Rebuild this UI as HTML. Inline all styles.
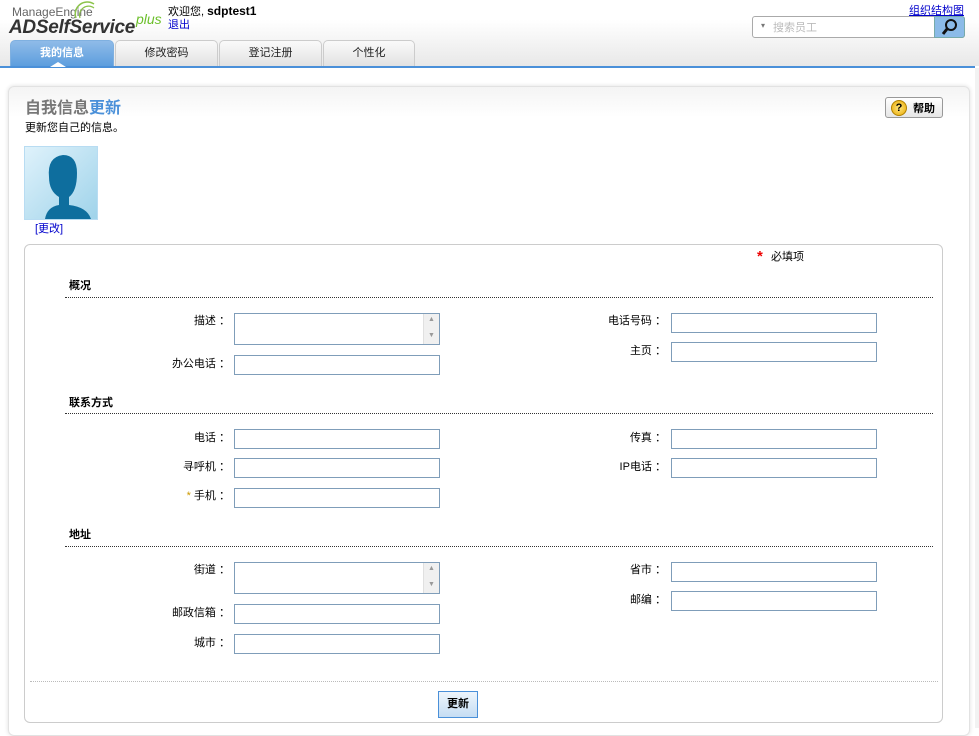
<!DOCTYPE html>
<html><head><meta charset="utf-8">
<style>
*{margin:0;padding:0;box-sizing:border-box}
body{width:979px;height:728px;overflow:hidden;background:#fff;font-family:"Liberation Sans","Noto Sans CJK SC",sans-serif;font-size:11px;color:#000;position:relative}
.a{position:absolute}
#hdr{left:0;top:0;width:979px;height:66px;background:linear-gradient(#fff,#fff 30%,#e8e8e8)}
#bl{left:0;top:66px;width:975px;height:2px;background:#4a90d9}
.tab{top:40px;height:26px;border:1px solid #ccc;border-bottom:none;border-radius:5px 5px 0 0;background:linear-gradient(#fafafa,#e2e2e2);text-align:center;line-height:24px;font-size:11px;color:#222}
.tab.on{background:linear-gradient(#8fbbe8,#5d9ede);border-color:#7fb0e0;color:#fff;font-weight:bold}
#panel{left:8px;top:86px;width:962px;height:650px;border:1px solid #e2e2e2;border-radius:6px;box-shadow:0 0 4px #ddd;background:linear-gradient(#f4f4f4,#fff 30px)}
.inp{height:20px;width:206px;border:1px solid #7f9db9;background:#fff}
.ta{height:32px;width:206px;border:1px solid #7f9db9;background:#fff}
.ta:after{content:"";position:absolute;right:0;top:0;width:15px;height:30px;background:#f0f0f0;border-left:1px solid #e0e0e0}
.lbl{font-size:11px;text-align:right;width:164px}
.sec{font-weight:bold;font-size:11px}
.hr{height:0;border-top:1px dotted #333}
</style></head><body>
<div id="hdr" class="a"></div>
<div class="a" style="left:12px;top:5px;font-size:12px;color:#666">ManageEngine</div>
<svg class="a" style="left:72px;top:0" width="26" height="20"><path d="M4 18 A12 12 0 0 1 22 4" stroke="#8bc34a" fill="none" stroke-width="1.5"/><path d="M8 18 A9 9 0 0 1 22 8" stroke="#8bc34a" fill="none" stroke-width="1.2"/></svg>
<div class="a" style="left:9px;top:17px;font-size:19px;font-weight:bold;font-style:italic;color:#333;letter-spacing:-0.3px">ADSelfService</div>
<div class="a" style="left:136px;top:11px;font-size:14px;color:#6bbf2a;font-style:italic">plus</div>
<div class="a" style="left:168px;top:3px;font-size:11px">欢迎您, <b style="font-size:12px">sdptest1</b></div>
<div class="a" style="left:168px;top:16px;font-size:11px;color:#00c">退出</div>
<div class="a" style="left:909px;top:2px;font-size:11px;color:#00c;text-decoration:underline">组织结构图</div>
<div class="a" style="left:752px;top:16px;width:213px;height:22px;border:1px solid #aaa;border-radius:3px;background:#fff"></div>
<div class="a" style="left:761px;top:21px;font-size:8px;color:#777">▾</div>
<div class="a" style="left:773px;top:19px;font-size:11px;color:#bbb">搜索员工</div>
<div class="a" style="left:934px;top:16px;width:31px;height:22px;background:#8bbbe8;border:1px solid #7aa;border-radius:0 3px 3px 0"></div>
<svg class="a" style="left:940px;top:18px" width="20" height="18"><circle cx="11" cy="7" r="5" stroke="#111" stroke-width="2" fill="none"/><path d="M7 11 L3 16" stroke="#111" stroke-width="3"/></svg>
<div class="a tab on" style="left:10px;width:104px">我的信息</div>
<div class="a tab" style="left:115px;width:103px">修改密码</div>
<div class="a tab" style="left:219px;width:103px">登记注册</div>
<div class="a tab" style="left:323px;width:92px">个性化</div>
<div id="bl" class="a"></div>
<div class="a" style="left:50px;top:62px;width:0;height:0;border-left:8px solid transparent;border-right:8px solid transparent;border-bottom:5px solid #fff"></div>
<div class="a" style="left:975px;top:68px;width:4px;height:660px;background:#f2f2f2"></div>

<div id="panel" class="a"></div>
<div class="a" style="left:25px;top:94px;font-size:16px;color:#777;font-weight:bold">自我信息<span style="color:#4a90d9">更新</span></div>
<div class="a" style="left:25px;top:119px;font-size:11px">更新您自己的信息。</div>
<div class="a" style="left:885px;top:97px;width:58px;height:21px;border:1px solid #999;border-radius:3px;background:linear-gradient(#fff,#e6e6e6)"></div>
<div class="a" style="left:891px;top:100px;width:16px;height:16px;border-radius:50%;background:radial-gradient(#ffe680,#e8a800);border:1px solid #b08000;font-size:11px;font-weight:bold;text-align:center;line-height:14px">?</div>
<div class="a" style="left:913px;top:100px;font-size:11px;font-weight:bold">帮助</div>

<div class="a" style="left:24px;top:146px;width:74px;height:74px;border:1px solid #b8dcf2;background:linear-gradient(135deg,#dff2fb,#9fd3ea)"></div>
<svg class="a" style="left:25px;top:147px" width="72" height="72"><path d="M20 72 Q22 60 34 58 L34 50 Q24 44 24 30 Q22 10 38 8 Q52 8 52 26 Q52 44 44 50 L44 58 Q62 60 66 72 Z" fill="#0e6e9e"/></svg>
<div class="a" style="left:35px;top:220px;font-size:11px;color:#00c">[更改]</div>

<div class="a" style="left:24px;top:244px;width:919px;height:479px;border:1px solid #ccc;border-radius:6px"></div>
<div class="a" style="left:757px;top:248px;color:#e00;font-size:15px;font-weight:bold">*</div>
<div class="a" style="left:771px;top:248px;font-size:11px">必填项</div>

<div class="a sec" style="left:69px;top:277px">概况</div>
<div class="a hr" style="left:65px;top:297px;width:868px"></div>
<div class="a lbl" style="left:66px;top:312px">描述 ：</div>
<div class="a ta" style="left:234px;top:313px"></div>
<div class="a" style="left:428px;top:316px;font-size:7px;color:#999">▲</div><div class="a" style="left:428px;top:332px;font-size:7px;color:#999">▼</div>
<div class="a lbl" style="left:66px;top:355px">办公电话 ：</div>
<div class="a inp" style="left:234px;top:355px"></div>
<div class="a lbl" style="left:502px;top:312px">电话号码 ：</div>
<div class="a inp" style="left:671px;top:313px"></div>
<div class="a lbl" style="left:502px;top:342px">主页 ：</div>
<div class="a inp" style="left:671px;top:342px"></div>

<div class="a sec" style="left:69px;top:394px">联系方式</div>
<div class="a hr" style="left:65px;top:413px;width:868px"></div>
<div class="a lbl" style="left:66px;top:429px">电话 ：</div>
<div class="a inp" style="left:234px;top:429px"></div>
<div class="a lbl" style="left:66px;top:458px">寻呼机 ：</div>
<div class="a inp" style="left:234px;top:458px"></div>
<div class="a lbl" style="left:66px;top:487px"><span style="color:#c90">*</span> 手机 ：</div>
<div class="a inp" style="left:234px;top:488px"></div>
<div class="a lbl" style="left:502px;top:429px">传真 ：</div>
<div class="a inp" style="left:671px;top:429px"></div>
<div class="a lbl" style="left:502px;top:458px">IP电话 ：</div>
<div class="a inp" style="left:671px;top:458px"></div>

<div class="a sec" style="left:69px;top:526px">地址</div>
<div class="a hr" style="left:65px;top:546px;width:868px"></div>
<div class="a lbl" style="left:66px;top:561px">街道 ：</div>
<div class="a ta" style="left:234px;top:562px"></div>
<div class="a" style="left:428px;top:565px;font-size:7px;color:#999">▲</div><div class="a" style="left:428px;top:581px;font-size:7px;color:#999">▼</div>
<div class="a lbl" style="left:66px;top:604px">邮政信箱 ：</div>
<div class="a inp" style="left:234px;top:604px"></div>
<div class="a lbl" style="left:66px;top:634px">城市 ：</div>
<div class="a inp" style="left:234px;top:634px"></div>
<div class="a lbl" style="left:502px;top:561px">省市 ：</div>
<div class="a inp" style="left:671px;top:562px"></div>
<div class="a lbl" style="left:502px;top:591px">邮编 ：</div>
<div class="a inp" style="left:671px;top:591px"></div>

<div class="a" style="left:30px;top:681px;width:908px;border-top:1px dotted #bbb"></div>
<div class="a" style="left:438px;top:691px;width:40px;height:27px;border:1px solid #4a90d9;background:linear-gradient(#eef5fc,#c5ddf3);text-align:center;line-height:25px;font-size:11px;font-weight:bold">更新</div>
</body></html>
